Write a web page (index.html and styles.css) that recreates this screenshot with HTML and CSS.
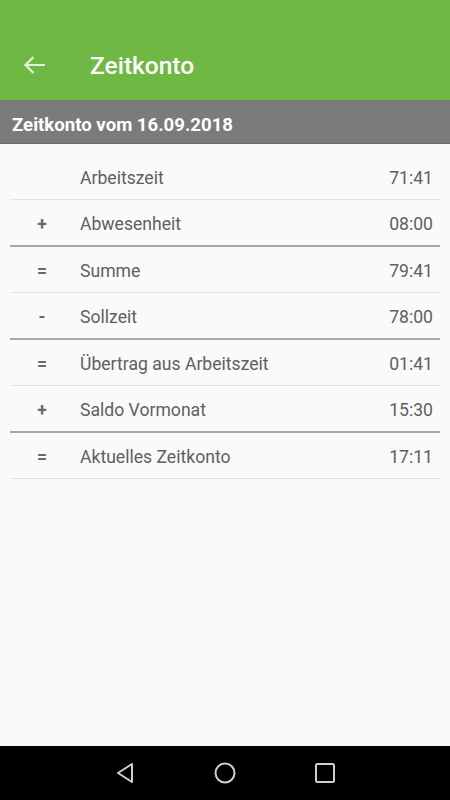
FILE: index.html
```html
<!DOCTYPE html>
<html lang="de">
<head>
<meta charset="utf-8">
<link rel="stylesheet" href="styles.css">
</head>
<body>
<div class="screen">
  <header class="appbar">
    <svg class="back" width="24" height="24" viewBox="0 0 24 24"><path d="M22 12H2.5M10.5 4l-8 8 8 8" fill="none" stroke="currentColor" stroke-width="2.2" stroke-linecap="butt"/></svg>
    <h1 class="title">Zeitkonto</h1>
  </header>
  <div class="subbar">Zeitkonto vom 16.09.2018</div>
  <main class="list">
    <div class="row"><span class="sign"></span><span class="label">Arbeitszeit</span><span class="value">71:41</span></div>
    <div class="row thick"><span class="sign">+</span><span class="label">Abwesenheit</span><span class="value">08:00</span></div>
    <div class="row"><span class="sign">=</span><span class="label">Summe</span><span class="value">79:41</span></div>
    <div class="row thick"><span class="sign">-</span><span class="label">Sollzeit</span><span class="value">78:00</span></div>
    <div class="row"><span class="sign">=</span><span class="label">Übertrag aus Arbeitszeit</span><span class="value">01:41</span></div>
    <div class="row thick"><span class="sign">+</span><span class="label">Saldo Vormonat</span><span class="value">15:30</span></div>
    <div class="row"><span class="sign">=</span><span class="label">Aktuelles Zeitkonto</span><span class="value">17:11</span></div>
  </main>
  <nav class="navbar">
    <svg width="22" height="24" viewBox="0 0 22 24"><path d="M18 3 L4 12 L18 21 Z" fill="none" stroke="#cfcfcf" stroke-width="2" stroke-linejoin="round"/></svg>
    <svg width="24" height="24" viewBox="0 0 24 24"><circle cx="12" cy="12" r="9.5" fill="none" stroke="#cfcfcf" stroke-width="2"/></svg>
    <svg width="22" height="22" viewBox="0 0 22 22"><rect x="2" y="2" width="18" height="18" rx="1.5" fill="none" stroke="#cfcfcf" stroke-width="2"/></svg>
  </nav>
</div>
</body>
</html>
```
FILE: styles.css
```css
* { box-sizing: border-box; }
html, body { margin: 0; padding: 0; }
body {
  font-family: Roboto, "Noto Sans", "Liberation Sans", sans-serif;
  background: #fafafa;
}
.screen {
  width: 450px;
  height: 800px;
  display: flex;
  flex-direction: column;
  background: #fafafa;
}
.appbar {
  height: 100px;
  background: #6fb843;
  display: flex;
  align-items: center;
  padding: 30px 0 0 23px;
}
.back {
  color: #e2f2d8;
  display: block;
}
.title {
  margin: 0 0 0 43px;
  font-size: 24.5px;
  font-weight: 500;
  color: #ffffff;
}
.subbar {
  height: 44px;
  background: #7b7b7b;
  border-bottom: 1px solid #6a6a6a;
  color: #ffffff;
  font-weight: 700;
  font-size: 18.6px;
  display: flex;
  align-items: center;
  padding: 6px 0 0 12px;
}
.list {
  flex: 1;
  padding: 10px 10px 0 10px;
}
.row {
  height: 46px;
  display: flex;
  align-items: center;
  border-bottom: 1px solid #e4e4e4;
  color: #606060;
  font-size: 17.6px;
  padding-top: 2px;
}
.row.thick {
  height: 47px;
  border-bottom: 2px solid #a8a8a8;
}
.sign {
  width: 64px;
  text-align: center;
  font-weight: 700;
  color: #6a6a6a;
  flex-shrink: 0;
}
.label {
  flex: 1;
  margin-left: 6px;
}
.value {
  padding-right: 7px;
}
.navbar {
  height: 54px;
  background: #000000;
  display: flex;
  align-items: center;
  justify-content: center;
  gap: 77px;
}
.navbar svg { display: block; }
```
